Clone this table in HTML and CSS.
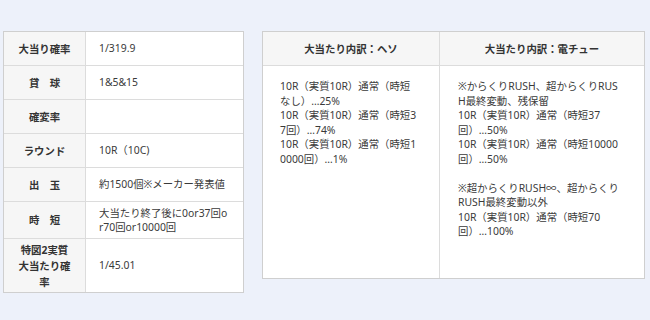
FILE: index.html
```html
<!DOCTYPE html>
<html lang="ja">
<head>
<meta charset="utf-8">
<link rel="stylesheet" href="styles.css">
</head>
<body>
<div class="page">
  <div class="spec">
    <div class="lbl">大当り確率</div><div class="val">1/319.9</div>
    <div class="lbl">貸　球</div><div class="val">1&amp;5&amp;15</div>
    <div class="lbl">確変率</div><div class="val"></div>
    <div class="lbl">ラウンド</div><div class="val">10R（10C)</div>
    <div class="lbl">出　玉</div><div class="val">約1500個※メーカー発表値</div>
    <div class="lbl">時　短</div><div class="val">大当たり終了後に0or37回or70回or10000回</div>
    <div class="lbl last">特図2実質大当たり確率</div><div class="val last">1/45.01</div>
  </div>
  <div class="detail">
    <div class="head">大当たり内訳：ヘソ</div>
    <div class="head">大当たり内訳：電チュー</div>
    <div class="body b1">10R（実質10R）通常（時短なし）…25%<br>10R（実質10R）通常（時短37回）…74%<br>10R（実質10R）通常（時短10000回）…1%</div>
    <div class="body b2">※からくりRUSH、超からくりRUSH最終変動、残保留<br>10R（実質10R）通常（時短37回）…50%<br>10R（実質10R）通常（時短10000回）…50%<br><br>※超からくりRUSH∞、超からくりRUSH最終変動以外<br>10R（実質10R）通常（時短70回）…100%</div>
  </div>
</div>
</body>
</html>
```

FILE: styles.css
```css
html, body {
  margin: 0;
  padding: 0;
  background: #edf1fa;
}
body {
  font-family: "Noto Sans", "Noto Sans CJK JP", sans-serif;
  font-size: 10.4px;
  color: #333;
}
.page {
  display: flex;
  align-items: flex-start;
  gap: 18px;
  padding: 31px 5px 0 3px;
}
.spec {
  width: 241px;
  box-sizing: border-box;
  display: grid;
  grid-template-columns: 82px 1fr;
  border: 1px solid #cfcfcf;
  background: #fff;
}
.lbl, .val {
  display: flex;
  align-items: center;
  min-height: 34px;
  box-sizing: border-box;
  border-bottom: 1px solid #dcdcdc;
  word-break: break-all;
}
.lbl {
  background: #f6f6f6;
  border-right: 1px solid #dcdcdc;
  justify-content: center;
  text-align: center;
  font-weight: bold;
  line-height: 16px;
  padding: 2.5px 12px;
}
.val {
  line-height: 14.5px;
  padding: 3.5px 14px 3.5px 13px;
  color: #3a3a3a;
}
.lbl.last, .val.last {
  border-bottom: 0;
}
.detail {
  width: 383px;
  box-sizing: border-box;
  display: grid;
  grid-template-columns: 177px 1fr;
  border: 1px solid #cfcfcf;
  background: #fff;
}
.head {
  background: #f6f6f6;
  height: 34px;
  box-sizing: border-box;
  border-bottom: 1px solid #dcdcdc;
  display: flex;
  align-items: center;
  justify-content: center;
  font-weight: bold;
}
.head:first-child, .b1 {
  border-right: 1px solid #dcdcdc;
}
.body {
  line-height: 14.5px;
  word-break: break-all;
  color: #3a3a3a;
  padding-top: 13px;
  padding-bottom: 39px;
}
.b1 {
  padding-left: 17px;
  padding-right: 20px;
}
.b2 {
  padding-left: 18px;
  padding-right: 22px;
}
```
